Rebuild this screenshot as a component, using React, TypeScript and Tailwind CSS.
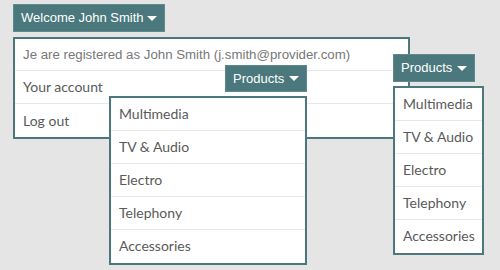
import * as React from "react";

const items = ["Multimedia", "TV & Audio", "Electro", "Telephony", "Accessories"];

const Caret = () => (
  <span className="inline-block w-0 h-0 border-l-[5px] border-r-[5px] border-t-[5px] border-l-transparent border-r-transparent border-t-white" />
);

const TealButton = ({ label, className }: { label: string; className: string }) => (
  <button
    className={`bg-[#4a787c] border border-[#5e8a8e] text-white text-[13px] whitespace-nowrap flex items-center justify-between pl-[7px] pr-[7px] font-['Liberation_Sans',Arial,sans-serif] ${className}`}
  >
    <span>{label}</span>
    <Caret />
  </button>
);

const MenuList = ({ className }: { className: string }) => (
  <ul className={`mt-[4px] bg-white border-2 border-[#4a787c] ${className}`}>
    {items.map((it, i) => (
      <li
        key={it}
        className={`h-[33px] flex items-center px-[8px] pb-[2px] text-[14px] text-[#5a5a5a] font-['Lato',sans-serif] ${
          i < items.length - 1 ? "border-b border-[#e8e8e8]" : ""
        }`}
      >
        {it}
      </li>
    ))}
  </ul>
);

const App: React.FC = () => {
  return (
    <div className="relative w-[500px] h-[270px] bg-[#e5e5e5] overflow-hidden">
      <div className="pl-[13px] pt-[4px] flex flex-col items-start">
        <TealButton label="Welcome John Smith" className="w-[152px] h-[28px]" />
        <div className="mt-[5px] w-[397px] bg-white border-2 border-[#4a787c] text-[14px]">
          <div className="h-[32px] flex items-center px-[8px] border-b border-[#e8e8e8] text-[13.25px] text-[#777] font-['Liberation_Sans',Arial,sans-serif]">
            Je are registered as John Smith (j.smith@provider.com)
          </div>
          <div className="h-[33px] flex items-center px-[8px] pb-[2px] border-b border-[#e8e8e8] text-[#5a5a5a] font-['Lato',sans-serif]">
            Your account
          </div>
          <div className="h-[33px] flex items-center px-[8px] text-[#5a5a5a] font-['Lato',sans-serif]">
            Log out
          </div>
        </div>
      </div>

      {/* dropdown opened over the panel */}
      <div className="absolute left-[109px] top-[65px] w-[198px] flex flex-col">
        <div className="flex justify-end">
          <TealButton label="Products" className="w-[82px] h-[27px]" />
        </div>
        <MenuList className="" />
      </div>

      {/* right-hand dropdown */}
      <div className="absolute left-[393px] top-[54px] flex flex-col items-start">
        <TealButton label="Products" className="w-[82px] h-[28px]" />
        <MenuList className="w-[91px]" />
      </div>
    </div>
  );
};

export default App;
